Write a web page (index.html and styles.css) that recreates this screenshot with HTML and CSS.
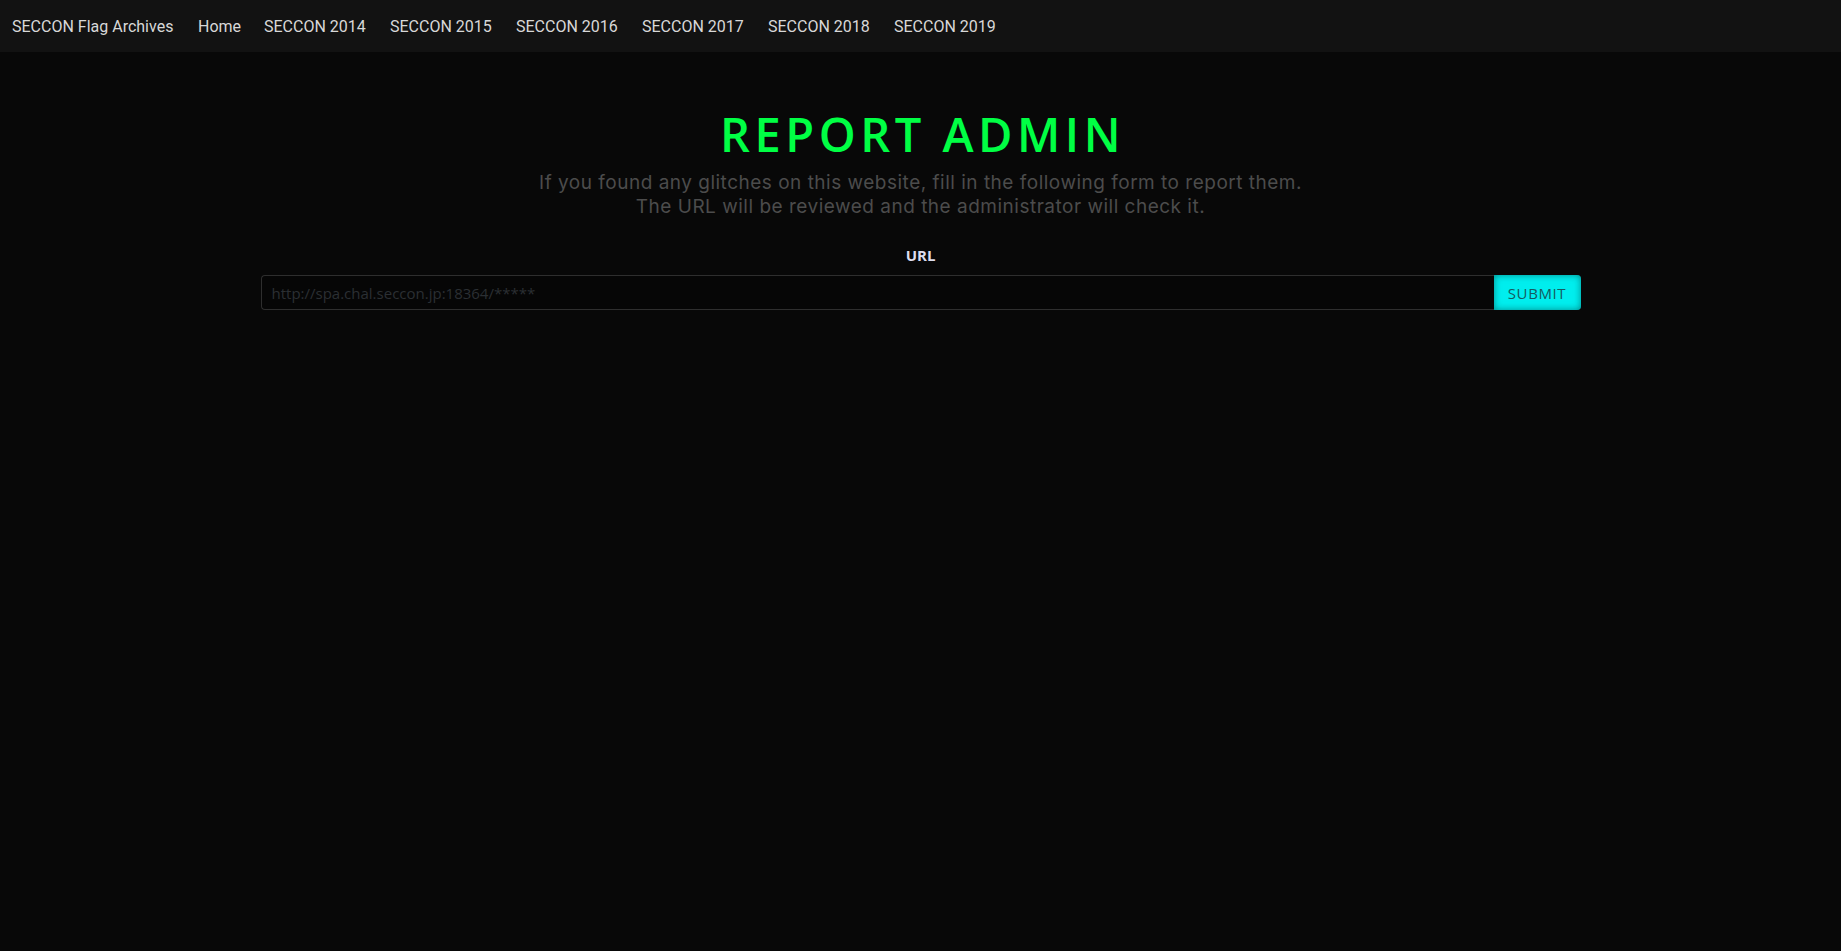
FILE: index.html
```html
<!DOCTYPE html>
<html lang="en">
<head>
<meta charset="utf-8">
<title>SECCON Flag Archives</title>
<link rel="stylesheet" href="styles.css">
</head>
<body>
<nav class="navbar">
  <a class="brand" href="#">SECCON Flag Archives</a>
  <ul class="nav-links">
    <li class="nav-home"><a href="#">Home</a></li>
    <li><a href="#">SECCON 2014</a></li>
    <li><a href="#">SECCON 2015</a></li>
    <li><a href="#">SECCON 2016</a></li>
    <li><a href="#">SECCON 2017</a></li>
    <li><a href="#">SECCON 2018</a></li>
    <li><a href="#">SECCON 2019</a></li>
  </ul>
</nav>
<main class="container">
  <h1 class="title">REPORT ADMIN</h1>
  <p class="lead">If you found any glitches on this website, fill in the following form to report them.<br>The URL will be reviewed and the administrator will check it.</p>
  <form class="report-form">
    <label class="url-label" for="url">URL</label>
    <div class="input-group">
      <input id="url" class="url-input" type="text" placeholder="http://spa.chal.seccon.jp:18364/*****">
      <button class="submit" type="button">SUBMIT</button>
    </div>
  </form>
</main>
</body>
</html>
```
FILE: styles.css
```css
html, body {
  margin: 0;
  padding: 0;
  background: #080808;
  min-height: 100%;
}
body {
  font-family: "Roboto", "Liberation Sans", sans-serif;
  color: #ddd;
}
.navbar {
  height: 52px;
  background: #121212;
  display: flex;
  align-items: center;
  padding-left: 12px;
  box-sizing: border-box;
}
.navbar a {
  color: #d8d8d8;
  text-decoration: none;
  font-size: 16px;
  white-space: nowrap;
}
.brand {
  flex: 0 0 186px;
}
.nav-links {
  list-style: none;
  display: flex;
  margin: 0;
  padding: 0;
}
.nav-links li {
  flex: 0 0 126px;
}
.nav-links li.nav-home {
  flex: 0 0 66px;
}
.container {
  width: 1320px;
  margin: 0 auto;
  display: flex;
  flex-direction: column;
  align-items: center;
  text-align: center;
}
.title {
  margin: 54px 0 9px;
  padding-left: 4px;
  font-family: "Open Sans", sans-serif;
  font-weight: 600;
  font-size: 47px;
  line-height: 56px;
  letter-spacing: 4.5px;
  color: #00ff44;
}
.lead {
  margin: 0;
  font-family: "Inter", "Open Sans", sans-serif;
  font-size: 19px;
  line-height: 24px;
  letter-spacing: 0.5px;
  color: #4c4c4c;
}
.report-form {
  width: 100%;
  display: flex;
  flex-direction: column;
  align-items: center;
  margin-top: 26px;
}
.url-label {
  font-family: "Open Sans", sans-serif;
  font-weight: 700;
  font-size: 15px;
  line-height: 20px;
  color: #dde;
  margin-bottom: 10px;
}
.input-group {
  display: flex;
  width: 100%;
  height: 35px;
}
.url-input {
  flex: 1;
  box-sizing: border-box;
  height: 35px;
  background: #060606;
  border: 1px solid #2e2e2e;
  border-right: none;
  border-radius: 4px 0 0 4px;
  padding: 0 10px;
  font-family: "Open Sans", sans-serif;
  font-size: 15px;
  color: #ccc;
  outline: none;
}
.url-input::placeholder {
  color: #2b2f33;
}
.submit {
  width: 87px;
  height: 35px;
  border: none;
  border-radius: 0 4px 4px 0;
  background: #00eeee;
  box-shadow: inset 0 0 7px rgba(0, 100, 100, 0.75);
  color: #165a60;
  font-family: "Open Sans", sans-serif;
  font-size: 15px;
  letter-spacing: 0.6px;
  padding: 0;
}
```
